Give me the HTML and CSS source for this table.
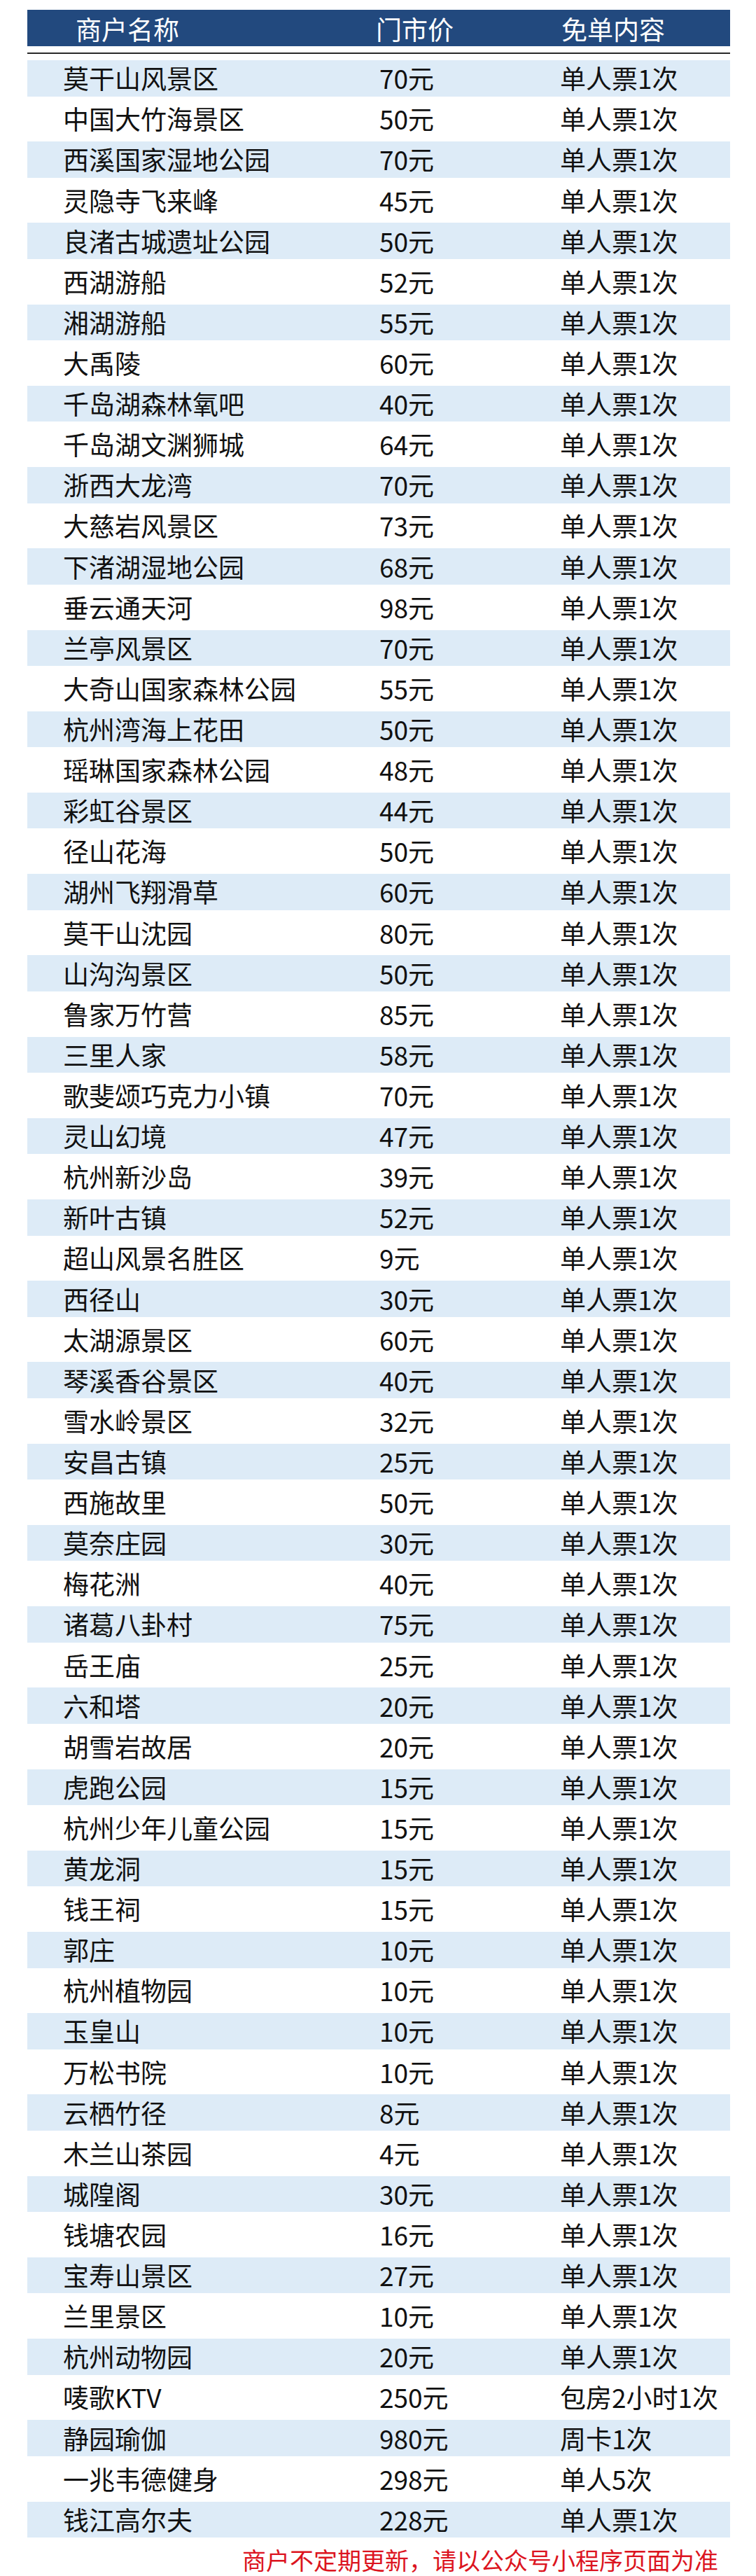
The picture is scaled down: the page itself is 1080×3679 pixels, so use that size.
FILE: index.html
```html
<!DOCTYPE html>
<html lang="zh-CN">
<head>
<meta charset="utf-8">
<title>免单商户</title>
<link rel="stylesheet" href="styles.css">
</head>
<body>
<div class="sheet">
  <div class="head">
    <div class="hc c1">商户名称</div>
    <div class="hc c2">门市价</div>
    <div class="hc c3">免单内容</div>
  </div>
  <div class="rule"></div>
  <div class="rows">
    <div class="row"><span class="c1">莫干山风景区</span><span class="c2">70元</span><span class="c3">单人票1次</span></div>
    <div class="row"><span class="c1">中国大竹海景区</span><span class="c2">50元</span><span class="c3">单人票1次</span></div>
    <div class="row"><span class="c1">西溪国家湿地公园</span><span class="c2">70元</span><span class="c3">单人票1次</span></div>
    <div class="row"><span class="c1">灵隐寺飞来峰</span><span class="c2">45元</span><span class="c3">单人票1次</span></div>
    <div class="row"><span class="c1">良渚古城遗址公园</span><span class="c2">50元</span><span class="c3">单人票1次</span></div>
    <div class="row"><span class="c1">西湖游船</span><span class="c2">52元</span><span class="c3">单人票1次</span></div>
    <div class="row"><span class="c1">湘湖游船</span><span class="c2">55元</span><span class="c3">单人票1次</span></div>
    <div class="row"><span class="c1">大禹陵</span><span class="c2">60元</span><span class="c3">单人票1次</span></div>
    <div class="row"><span class="c1">千岛湖森林氧吧</span><span class="c2">40元</span><span class="c3">单人票1次</span></div>
    <div class="row"><span class="c1">千岛湖文渊狮城</span><span class="c2">64元</span><span class="c3">单人票1次</span></div>
    <div class="row"><span class="c1">浙西大龙湾</span><span class="c2">70元</span><span class="c3">单人票1次</span></div>
    <div class="row"><span class="c1">大慈岩风景区</span><span class="c2">73元</span><span class="c3">单人票1次</span></div>
    <div class="row"><span class="c1">下渚湖湿地公园</span><span class="c2">68元</span><span class="c3">单人票1次</span></div>
    <div class="row"><span class="c1">垂云通天河</span><span class="c2">98元</span><span class="c3">单人票1次</span></div>
    <div class="row"><span class="c1">兰亭风景区</span><span class="c2">70元</span><span class="c3">单人票1次</span></div>
    <div class="row"><span class="c1">大奇山国家森林公园</span><span class="c2">55元</span><span class="c3">单人票1次</span></div>
    <div class="row"><span class="c1">杭州湾海上花田</span><span class="c2">50元</span><span class="c3">单人票1次</span></div>
    <div class="row"><span class="c1">瑶琳国家森林公园</span><span class="c2">48元</span><span class="c3">单人票1次</span></div>
    <div class="row"><span class="c1">彩虹谷景区</span><span class="c2">44元</span><span class="c3">单人票1次</span></div>
    <div class="row"><span class="c1">径山花海</span><span class="c2">50元</span><span class="c3">单人票1次</span></div>
    <div class="row"><span class="c1">湖州飞翔滑草</span><span class="c2">60元</span><span class="c3">单人票1次</span></div>
    <div class="row"><span class="c1">莫干山沈园</span><span class="c2">80元</span><span class="c3">单人票1次</span></div>
    <div class="row"><span class="c1">山沟沟景区</span><span class="c2">50元</span><span class="c3">单人票1次</span></div>
    <div class="row"><span class="c1">鲁家万竹营</span><span class="c2">85元</span><span class="c3">单人票1次</span></div>
    <div class="row"><span class="c1">三里人家</span><span class="c2">58元</span><span class="c3">单人票1次</span></div>
    <div class="row"><span class="c1">歌斐颂巧克力小镇</span><span class="c2">70元</span><span class="c3">单人票1次</span></div>
    <div class="row"><span class="c1">灵山幻境</span><span class="c2">47元</span><span class="c3">单人票1次</span></div>
    <div class="row"><span class="c1">杭州新沙岛</span><span class="c2">39元</span><span class="c3">单人票1次</span></div>
    <div class="row"><span class="c1">新叶古镇</span><span class="c2">52元</span><span class="c3">单人票1次</span></div>
    <div class="row"><span class="c1">超山风景名胜区</span><span class="c2">9元</span><span class="c3">单人票1次</span></div>
    <div class="row"><span class="c1">西径山</span><span class="c2">30元</span><span class="c3">单人票1次</span></div>
    <div class="row"><span class="c1">太湖源景区</span><span class="c2">60元</span><span class="c3">单人票1次</span></div>
    <div class="row"><span class="c1">琴溪香谷景区</span><span class="c2">40元</span><span class="c3">单人票1次</span></div>
    <div class="row"><span class="c1">雪水岭景区</span><span class="c2">32元</span><span class="c3">单人票1次</span></div>
    <div class="row"><span class="c1">安昌古镇</span><span class="c2">25元</span><span class="c3">单人票1次</span></div>
    <div class="row"><span class="c1">西施故里</span><span class="c2">50元</span><span class="c3">单人票1次</span></div>
    <div class="row"><span class="c1">莫奈庄园</span><span class="c2">30元</span><span class="c3">单人票1次</span></div>
    <div class="row"><span class="c1">梅花洲</span><span class="c2">40元</span><span class="c3">单人票1次</span></div>
    <div class="row"><span class="c1">诸葛八卦村</span><span class="c2">75元</span><span class="c3">单人票1次</span></div>
    <div class="row"><span class="c1">岳王庙</span><span class="c2">25元</span><span class="c3">单人票1次</span></div>
    <div class="row"><span class="c1">六和塔</span><span class="c2">20元</span><span class="c3">单人票1次</span></div>
    <div class="row"><span class="c1">胡雪岩故居</span><span class="c2">20元</span><span class="c3">单人票1次</span></div>
    <div class="row"><span class="c1">虎跑公园</span><span class="c2">15元</span><span class="c3">单人票1次</span></div>
    <div class="row"><span class="c1">杭州少年儿童公园</span><span class="c2">15元</span><span class="c3">单人票1次</span></div>
    <div class="row"><span class="c1">黄龙洞</span><span class="c2">15元</span><span class="c3">单人票1次</span></div>
    <div class="row"><span class="c1">钱王祠</span><span class="c2">15元</span><span class="c3">单人票1次</span></div>
    <div class="row"><span class="c1">郭庄</span><span class="c2">10元</span><span class="c3">单人票1次</span></div>
    <div class="row"><span class="c1">杭州植物园</span><span class="c2">10元</span><span class="c3">单人票1次</span></div>
    <div class="row"><span class="c1">玉皇山</span><span class="c2">10元</span><span class="c3">单人票1次</span></div>
    <div class="row"><span class="c1">万松书院</span><span class="c2">10元</span><span class="c3">单人票1次</span></div>
    <div class="row"><span class="c1">云栖竹径</span><span class="c2">8元</span><span class="c3">单人票1次</span></div>
    <div class="row"><span class="c1">木兰山茶园</span><span class="c2">4元</span><span class="c3">单人票1次</span></div>
    <div class="row"><span class="c1">城隍阁</span><span class="c2">30元</span><span class="c3">单人票1次</span></div>
    <div class="row"><span class="c1">钱塘农园</span><span class="c2">16元</span><span class="c3">单人票1次</span></div>
    <div class="row"><span class="c1">宝寿山景区</span><span class="c2">27元</span><span class="c3">单人票1次</span></div>
    <div class="row"><span class="c1">兰里景区</span><span class="c2">10元</span><span class="c3">单人票1次</span></div>
    <div class="row"><span class="c1">杭州动物园</span><span class="c2">20元</span><span class="c3">单人票1次</span></div>
    <div class="row"><span class="c1">唛歌KTV</span><span class="c2">250元</span><span class="c3">包房2小时1次</span></div>
    <div class="row"><span class="c1">静园瑜伽</span><span class="c2">980元</span><span class="c3">周卡1次</span></div>
    <div class="row"><span class="c1">一兆韦德健身</span><span class="c2">298元</span><span class="c3">单人5次</span></div>
    <div class="row"><span class="c1">钱江高尔夫</span><span class="c2">228元</span><span class="c3">单人票1次</span></div>
  </div>
  <p class="note">商户不定期更新，请以公众号小程序页面为准</p>
</div>
</body>
</html>
```
FILE: styles.css
```css
html, body {
  margin: 0;
  padding: 0;
  background: #ffffff;
}

body {
  font-family: "Noto Sans CJK SC", "Noto Sans", sans-serif;
  color: #111111;
}

.sheet {
  width: 1004px;
  margin-left: 39px;
  padding-top: 14px;
}

.head {
  display: grid;
  grid-template-columns: 498px 263px 243px;
  align-items: center;
  height: 52px;
  background: #22497e;
  color: #ffffff;
  font-size: 37px;
  line-height: 1;
}

.hc {
  padding-top: 2px;
}

.head .c1 { padding-left: 69px; }
.head .c2 { padding-left: 0; }
.head .c3 { padding-left: 2px; }

.rule {
  margin-top: 9px;
  height: 2px;
  background: #2a2a2a;
}

.rows {
  margin-top: 5.7px;
}

.row {
  display: grid;
  grid-template-columns: 498px 263px 243px;
  align-items: center;
  box-sizing: border-box;
  height: 58.12px;
  padding: 3.3px 0;
  background-clip: content-box;
  font-size: 37px;
  line-height: 1;
  white-space: nowrap;
}

.row:nth-child(odd) {
  background-color: #ddebf7;
}

.row .c1 { padding-left: 51px; }
.row .c2 { padding-left: 5px; }
.row .c3 { padding-left: 0; }

.note {
  margin: 9px 0 0 0;
  padding-right: 17px;
  text-align: right;
  font-size: 34px;
  line-height: 40px;
  color: #dc1420;
  white-space: nowrap;
}
```
